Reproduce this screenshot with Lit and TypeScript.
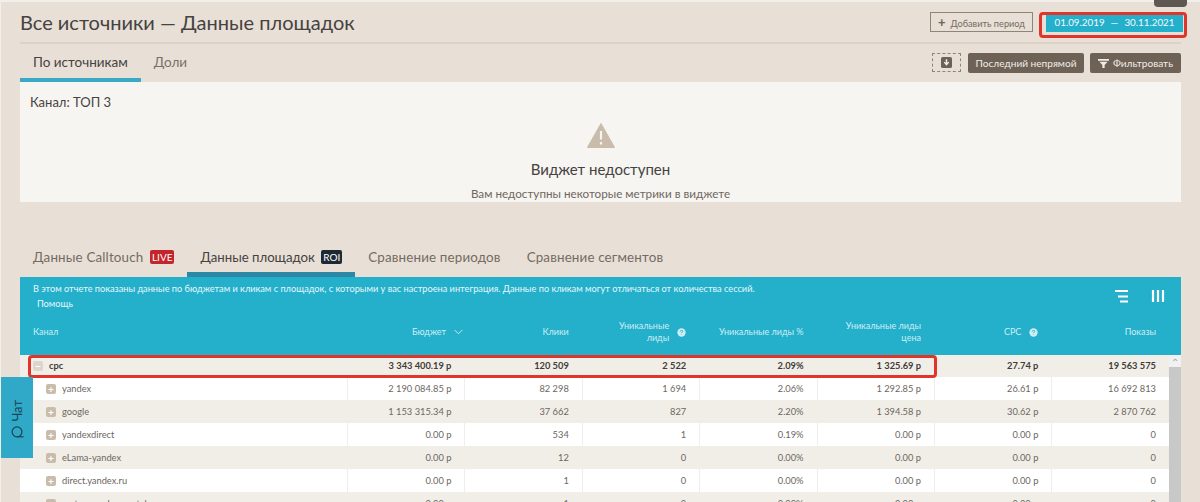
import { css, html, LitElement, svg } from "lit";
import { customElement } from "lit/decorators.js";

const rows = [
  ["yandex", "2 190 084.85 р", "82 298", "1 694", "2.06%", "1 292.85 р", "26.61 р", "16 692 813"],
  ["google", "1 153 315.34 р", "37 662", "827", "2.20%", "1 394.58 р", "30.62 р", "2 870 762"],
  ["yandexdirect", "0.00 р", "534", "1", "0.19%", "0.00 р", "0.00 р", "0"],
  ["eLama-yandex", "0.00 р", "12", "0", "0.00%", "0.00 р", "0.00 р", "0"],
  ["direct.yandex.ru", "0.00 р", "1", "0", "0.00%", "0.00 р", "0.00 р", "0"],
  ["rostov-na-donu.catalogxxx.ru", "0.00 р", "1", "0", "0.00%", "0.00 р", "0.00 р", "0"],
];

const total = ["cpc", "3 343 400.19 р", "120 509", "2 522", "2.09%", "1 325.69 р", "27.74 р", "19 563 575"];

const helpIcon = svg`<svg class="help" viewBox="0 0 10 10" width="9" height="9">
  <circle cx="5" cy="5" r="4.6" fill="#cfeef5" />
  <path d="M3.6 4q0-1.5 1.5-1.4 1.4.1 1.3 1.2 0 .7-.9 1.1-.5.3-.5.8M5 7.2v.5" fill="none" stroke="#24afcb" stroke-width="1" />
</svg>`;

@customElement("app-root")
export class AppRoot extends LitElement {
  renderRow(row: string[], cls: string, sign: string) {
    return html`
      <div class="row ${cls}">
        <div class="cell name">
          <span class="toggle">${sign}</span>
          <span>${row[0]}</span>
        </div>
        ${row.slice(1).map((v) => html`<div class="cell">${v}</div>`)}
      </div>
    `;
  }

  render() {
    return html`
      <div class="page">
        <div class="corner"></div>

        <header class="top">
          <h1>Все источники — Данные площадок</h1>
          <button class="add"><span class="plus">+</span>Добавить период</button>
          <div class="date"><span>01.09.2019</span><span>—</span><span>30.11.2021</span></div>
        </header>

        <div class="subbar">
          <div class="tabs-small">
            <div class="tab-small on">По источникам</div>
            <div class="tab-small">Доли</div>
          </div>
          <div class="actions">
            <div class="dl">
              <svg viewBox="0 0 12 12" width="11" height="11">
                <rect width="12" height="12" rx="2" fill="#6e6257" />
                <path d="M6 2.5v5M3.6 5.6 6 8.4l2.4-2.8" fill="none" stroke="#f1ece6" stroke-width="1.6" />
              </svg>
            </div>
            <button class="dark">Последний непрямой</button>
            <button class="dark filter">
              <svg viewBox="0 0 12 12" width="11" height="11">
                <path d="M0 1h12v2H0zM1.5 4h9L7.2 7.5V11H4.8V7.5z" fill="#f1ece6" />
              </svg>
              Фильтровать
            </button>
          </div>
        </div>

        <section class="widget">
          <div class="channel">Канал: ТОП 3</div>
          <div class="blocked">
            <svg viewBox="0 0 28 25" width="28" height="25">
              <path d="M14 0.5 27.6 24.5H.4z" fill="#c9bcab" stroke="#c9bcab" stroke-linejoin="round" />
              <path d="M14 8v8.5M14 19v2.5" stroke="#f6f5f1" stroke-width="2.2" />
            </svg>
            <div class="blocked-title">Виджет недоступен</div>
            <div class="blocked-text">Вам недоступны некоторые метрики в виджете</div>
          </div>
        </section>

        <nav class="tabs">
          <div class="tab">Данные Calltouch <span class="badge live">LIVE</span></div>
          <div class="tab on">Данные площадок <span class="badge roi">ROI</span></div>
          <div class="tab">Сравнение периодов</div>
          <div class="tab">Сравнение сегментов</div>
        </nav>

        <section class="report">
          <div class="info">
            <div class="info-text">
              <div>В этом отчете показаны данные по бюджетам и кликам с площадок, с которыми у вас настроена интеграция. Данные по кликам могут отличаться от количества сессий.</div>
              <div class="help-link">Помощь</div>
            </div>
            <div class="tools">
              <svg viewBox="0 0 14 14" width="14" height="14">
                <path d="M1 2h13M4 7.5h10M6 12.5h8" stroke="#fff" stroke-width="2" />
              </svg>
              <svg viewBox="0 0 14 14" width="14" height="14">
                <path d="M2 1v12M7 1v12M12 1v12" stroke="#fff" stroke-width="2.2" />
              </svg>
            </div>
          </div>
          <div class="row head">
            <div class="cell name">Канал</div>
            <div class="cell budget">
              Бюджет
              <svg viewBox="0 0 10 6" width="9" height="6" class="chev">
                <path d="M.7.7 5 5 9.3.7" fill="none" stroke="#d8f2f7" stroke-width="1" />
              </svg>
            </div>
            <div class="cell">Клики</div>
            <div class="cell with-help"><span>Уникальные<br />лиды</span>${helpIcon}</div>
            <div class="cell">Уникальные лиды %</div>
            <div class="cell"><span>Уникальные лиды<br />цена</span></div>
            <div class="cell with-help"><span>CPC</span>${helpIcon}</div>
            <div class="cell">Показы</div>
          </div>
          <div class="body">
            <div class="rows">
              ${this.renderRow(total, "total", "−")}
              ${rows.map((r, i) => this.renderRow(r, i % 2 ? "odd" : "even", "+"))}
            </div>
            <div class="scroll"><div class="arrow">⌃</div></div>
          </div>
          <div class="mark mark-row"></div>
        </section>

        <div class="mark mark-date"></div>

        <div class="chat">
          <span>Чат</span>
          <svg viewBox="0 0 14 14" width="13" height="13">
            <circle cx="6.5" cy="6.3" r="5.3" fill="none" stroke="#1c4452" stroke-width="1.3" />
            <path d="M6.5 11.6H13.5" fill="none" stroke="#1c4452" stroke-width="1.3" />
          </svg>
        </div>
      </div>
    `;
  }

  static styles = css`
    :host {
      display: block;
      height: 502px;
      overflow: hidden;
      font-family: Lato, "Open Sans", "Noto Sans", sans-serif;
      color: #4a4641;
    }

    * {
      box-sizing: border-box;
    }

    .page {
      position: relative;
      height: 502px;
      padding: 2px 19px 0 19px;
      background: linear-gradient(#f2efea 2px, #e8dfd6 2px);
      border-left: 1px solid #f2efea;
      overflow: hidden;
    }

    .corner {
      position: absolute;
      top: 0;
      right: 13px;
      width: 33px;
      height: 7px;
      background: #5f5751;
      border-radius: 0 0 4px 4px;
    }

    .top {
      display: flex;
      align-items: center;
      height: 42px;
      border-bottom: 2px solid #ddd2c6;
    }

    h1 {
      flex: 1;
      margin: 0;
      font-size: 20px;
      font-weight: 400;
      color: #45423f;
    }

    button {
      font-family: inherit;
      cursor: pointer;
    }

    .add {
      width: 103px;
      height: 20px;
      margin-right: 13px;
      padding: 0;
      background: transparent;
      border: 1px solid #8f8478;
      color: #756b61;
      font-size: 9.2px;
    }

    .plus {
      font-size: 13px;
      font-weight: 700;
      margin-right: 5px;
      color: #6e6257;
    }

    .date {
      display: flex;
      align-items: center;
      justify-content: center;
      gap: 6px;
      flex: none;
      width: 137px;
      height: 20px;
      margin-right: -2px;
      background: #24afcb;
      color: #f4fbfc;
      font-size: 9.8px;
    }

    .subbar {
      display: flex;
      justify-content: space-between;
      height: 38px;
    }

    .tabs-small {
      display: flex;
    }

    .tab-small {
      padding: 10px 13px 0;
      font-size: 13.5px;
      color: #7a7067;
    }

    .tab-small.on {
      color: #45423f;
      border-bottom: 4px solid #3aa9c6;
    }

    .actions {
      display: flex;
      align-items: flex-start;
      gap: 6px;
      padding-top: 9px;
    }

    .dl {
      display: flex;
      align-items: center;
      justify-content: center;
      width: 29px;
      height: 19px;
      margin-right: 1px;
      border: 1px dashed #8f8478;
    }

    .dark {
      display: flex;
      align-items: center;
      justify-content: center;
      gap: 4px;
      width: 116px;
      height: 20px;
      padding: 0;
      border: none;
      border-radius: 2px;
      background: #6e6257;
      color: #f1ece6;
      font-size: 10.1px;
    }

    .filter {
      width: 91px;
    }

    .widget {
      height: 120px;
      padding: 12px 10px 0;
      background: #f6f5f1;
    }

    .channel {
      font-size: 13px;
      color: #45423f;
    }

    .blocked {
      display: flex;
      flex-direction: column;
      align-items: center;
      margin-top: 13px;
    }

    .blocked-title {
      margin-top: 12px;
      font-size: 15px;
      color: #45423f;
    }

    .blocked-text {
      margin-top: 8px;
      font-size: 11.7px;
      color: #6f675f;
    }

    .tabs {
      display: flex;
      align-items: flex-start;
      height: 75px;
      padding-top: 44px;
    }

    .tab {
      height: 31px;
      padding: 3px 13px 0;
      font-size: 13.4px;
      letter-spacing: 0.15px;
      color: #746b62;
      white-space: nowrap;
    }

    .tab.on {
      color: #45423f;
      font-size: 13.2px;
      letter-spacing: 0;
      border-bottom: 5px solid #2d88a5;
    }

    .badge {
      display: inline-block;
      margin-left: 3px;
      padding: 0 2px;
      border-radius: 2px;
      font-size: 10px;
      letter-spacing: 0;
      line-height: 14px;
      color: #fff;
      vertical-align: 1px;
    }

    .live {
      background: #c4252c;
    }

    .roi {
      background: #1e2a33;
    }

    .report {
      position: relative;
      background: #24afcb;
    }

    .info {
      display: flex;
      justify-content: space-between;
      height: 41px;
      padding: 6px 16px 0 13px;
      color: #e6f7fa;
      font-size: 9.2px;
    }

    .help-link {
      margin: 4px 0 0 4px;
    }

    .tools {
      display: flex;
      gap: 23px;
      padding-top: 6px;
    }

    .row {
      display: grid;
      grid-template-columns: 327px repeat(6, 117.4px) 117.6px;
    }

    .head {
      align-items: center;
      height: 37px;
      padding-bottom: 9px;
      color: #cdeef4;
      font-size: 9px;
    }

    .head .cell {
      height: auto;
      line-height: 12px;
      border: none;
    }

    .head .name {
      padding-left: 13px;
    }

    .cell {
      height: 23px;
      padding: 0 13px;
      line-height: 23px;
      text-align: right;
      white-space: nowrap;
      border-left: 1px solid #f1eee9;
    }

    .budget {
      padding-right: 16px;
    }

    .budget .chev {
      margin: 0 -15px 0 6px;
    }

    .with-help {
      display: flex;
      justify-content: flex-end;
      align-items: center;
      gap: 8px;
      padding-right: 13px;
    }

    .name {
      display: flex;
      align-items: center;
      gap: 6px;
      text-align: left;
      border-left: none;
    }

    .body {
      display: flex;
      background: #fff;
      font-size: 9.3px;
      color: #6c665f;
    }

    .rows {
      flex: none;
      width: 1149px;
    }

    .even {
      background: #fff;
    }

    .odd {
      background: #f1eee8;
    }

    .row:not(.head) .name {
      padding-left: 26px;
    }

    .total {
      height: 22px;
      background: #f1eee8;
      color: #3f3c39;
      font-weight: 700;
    }

    .total .cell {
      height: 22px;
      line-height: 22px;
    }

    .row.total .name {
      padding-left: 13px;
    }

    .toggle {
      display: inline-flex;
      align-items: center;
      justify-content: center;
      width: 10px;
      height: 10px;
      border-radius: 2px;
      background: #c9bcab;
      color: #fff;
      font-size: 10px;
      font-weight: 700;
      line-height: 1;
    }

    .total .toggle {
      background: #ddd6cb;
    }

    .scroll {
      flex: 1;
      background: #c8c8c8;
    }

    .arrow {
      height: 12px;
      background: #f1f1f1;
      color: #a8a8a8;
      font-size: 10px;
      line-height: 14px;
      text-align: center;
    }

    .mark {
      position: absolute;
      border: 3px solid #e0352b;
      border-radius: 4px;
    }

    .mark-date {
      top: 12px;
      left: 1038px;
      width: 148px;
      height: 26px;
    }

    .mark-row {
      top: 78px;
      left: 8px;
      width: 909px;
      height: 23px;
    }

    .chat {
      position: absolute;
      top: 377px;
      left: 0;
      display: flex;
      align-items: center;
      justify-content: flex-end;
      gap: 5px;
      width: 32px;
      height: 81px;
      padding-bottom: 19px;
      writing-mode: vertical-rl;
      background: #30a8c8;
      color: #1c4452;
      font-size: 13px;
    }

    .chat span {
      transform: rotate(180deg);
    }
  `;
}
